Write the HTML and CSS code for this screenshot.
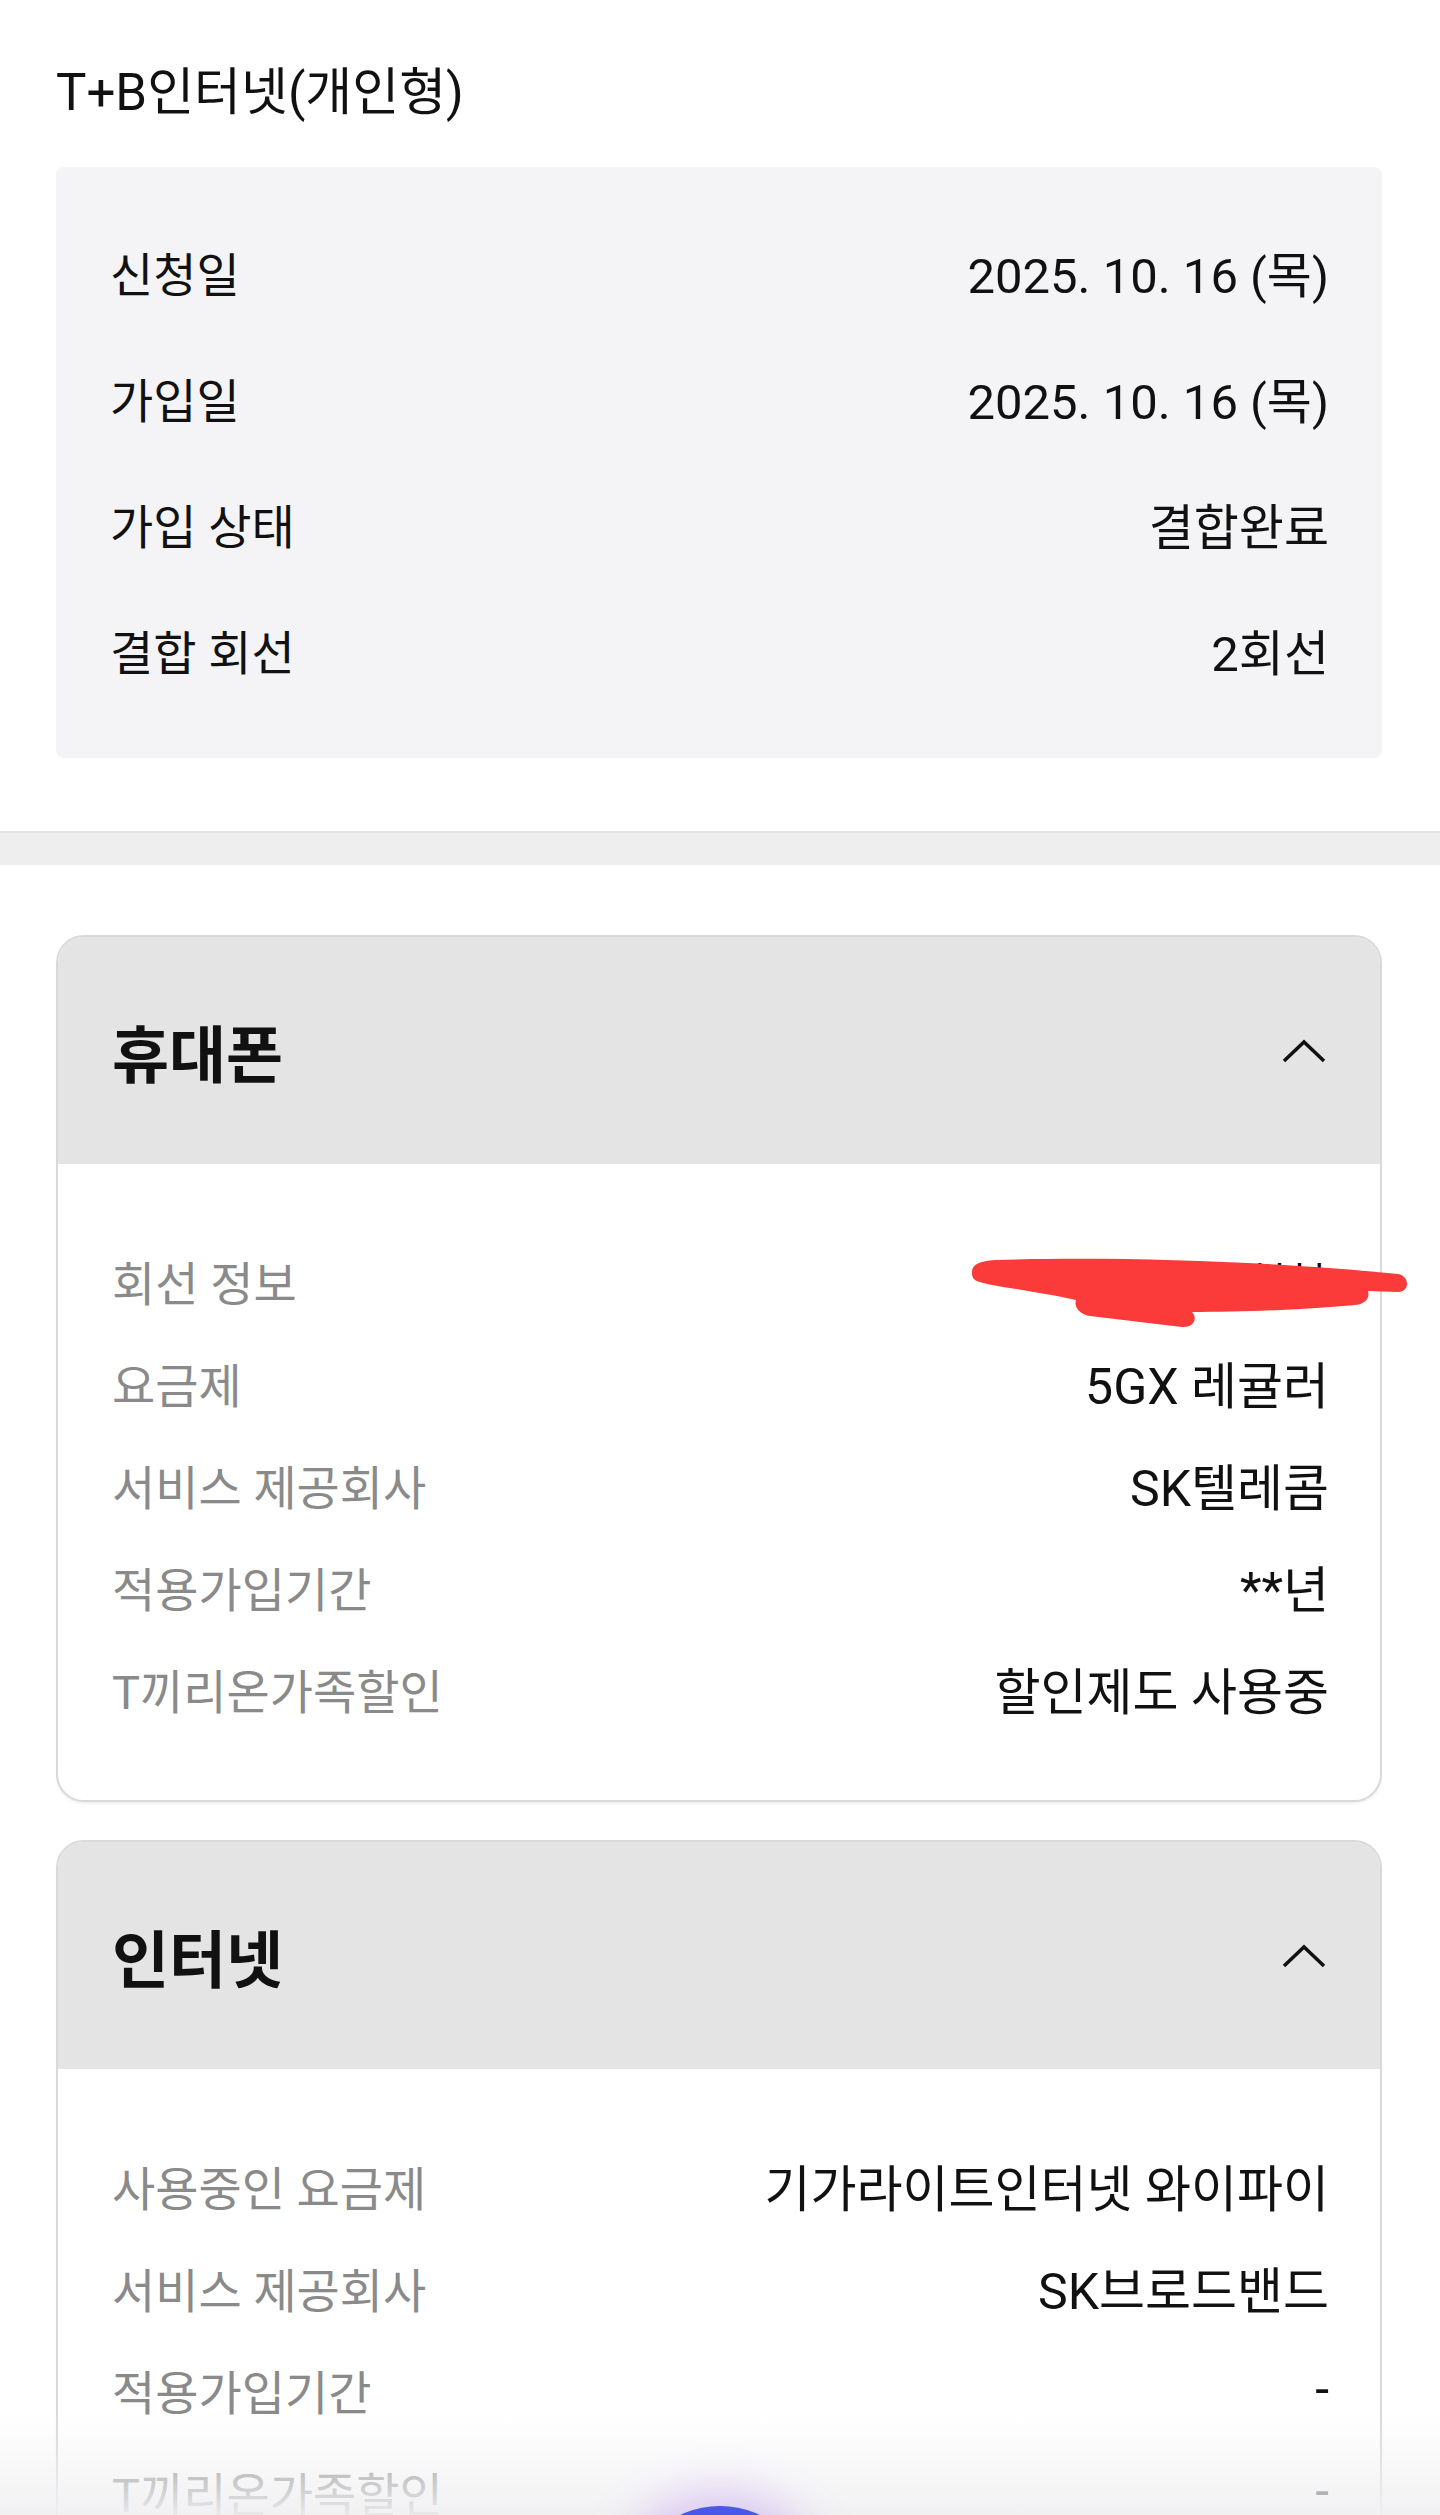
FILE: index.html
```html
<!DOCTYPE html>
<html lang="ko">
<head>
    <meta charset="UTF-8">
    <meta name="viewport" content="width=device-width, initial-scale=1.0">
    <title>결합 상세</title>
    <link rel="stylesheet" href="styles.css">
</head>
<body>
<div class="page">

    <section class="summary">
        <h1 class="plan-title">T+B인터넷(개인형)</h1>
        <dl class="summary-box">
            <div class="summary-row"><dt>신청일</dt><dd>2025. 10. 16 (목)</dd></div>
            <div class="summary-row"><dt>가입일</dt><dd>2025. 10. 16 (목)</dd></div>
            <div class="summary-row"><dt>가입 상태</dt><dd>결합완료</dd></div>
            <div class="summary-row"><dt>결합 회선</dt><dd>2회선</dd></div>
        </dl>
    </section>

    <div class="divider"></div>

    <section class="lines">
        <div class="line-card">
            <div class="line-head">
                <h2>휴대폰</h2>
                <svg class="chevron" viewBox="0 0 44 24" width="44" height="24">
                    <polyline points="2,22 22,3 42,22" fill="none" stroke="#111" stroke-width="3.5"/>
                </svg>
            </div>
            <dl class="line-body">
                <div class="line-row">
                    <dt>회선 정보</dt>
                    <dd class="masked">010-****-****</dd>
                    <!-- 가림 표시 -->
                    <svg class="scribble" viewBox="960 1250 460 90" width="460" height="90">
                        <path fill="#fb3a3a" d="M972 1276 C972 1268 980 1265 995 1264 C1120 1260 1280 1266 1398 1278 C1410 1280 1410 1296 1398 1296 L1368 1295 C1370 1302 1366 1308 1355 1309 C1300 1314 1240 1316 1192 1316 C1198 1322 1194 1332 1182 1331 L1090 1320 C1078 1318 1074 1310 1076 1304 C1030 1294 990 1290 980 1286 C972 1284 972 1280 972 1276 Z"/>
                    </svg>
                </div>
                <div class="line-row"><dt>요금제</dt><dd>5GX 레귤러</dd></div>
                <div class="line-row"><dt>서비스 제공회사</dt><dd>SK텔레콤</dd></div>
                <div class="line-row"><dt>적용가입기간</dt><dd>**년</dd></div>
                <div class="line-row"><dt>T끼리온가족할인</dt><dd>할인제도 사용중</dd></div>
            </dl>
        </div>

        <div class="line-card">
            <div class="line-head">
                <h2>인터넷</h2>
                <svg class="chevron" viewBox="0 0 44 24" width="44" height="24">
                    <polyline points="2,22 22,3 42,22" fill="none" stroke="#111" stroke-width="3.5"/>
                </svg>
            </div>
            <dl class="line-body">
                <div class="line-row"><dt>사용중인 요금제</dt><dd>기가라이트인터넷 와이파이</dd></div>
                <div class="line-row"><dt>서비스 제공회사</dt><dd>SK브로드밴드</dd></div>
                <div class="line-row"><dt>적용가입기간</dt><dd>-</dd></div>
                <div class="line-row"><dt>T끼리온가족할인</dt><dd>-</dd></div>
            </dl>
        </div>
    </section>

    <div class="bottom-fade"></div>
    <div class="fab"></div>
</div>
</body>
</html>
```

FILE: styles.css
```css
html, body {
    margin: 0;
    padding: 0;
}
body {
    font-family: Roboto, "Noto Sans CJK KR", sans-serif;
    color: #111;
    background-color: #fff;
}
.page {
    position: relative;
    height: 2515px;
    overflow: hidden;
}
dl, dt, dd {
    margin: 0;
}

/* 상단 요약 */
.summary {
    padding: 61px 58px 73px 56px;
}
.plan-title {
    margin: 0;
    font-size: 51px;
    font-weight: 400;
    line-height: 64px;
}
.summary-box {
    margin-top: 42px;
    background-color: #f4f4f6;
    border-radius: 8px;
    padding: 41px 53px 46px 54px;
}
.summary-row {
    display: flex;
    justify-content: space-between;
    align-items: center;
    height: 126px;
    font-size: 47px;
}
.summary-row dd {
    font-size: 49px;
}

.divider {
    height: 32px;
    background-color: #eeeeef;
    border-top: 2px solid #e3e3e5;
}

/* 회선 카드 */
.lines {
    display: flex;
    flex-direction: column;
    gap: 38px;
    padding: 70px 58px 0 56px;
}
.line-card {
    border: 2px solid #d9d9d9;
    border-radius: 28px;
    box-shadow: 0 2px 2px rgba(0, 0, 0, 0.06);
    background-color: #fff;
}
.line-head {
    display: flex;
    justify-content: space-between;
    align-items: center;
    height: 227px;
    padding: 0 54px;
    background-color: #e4e4e4;
    border-radius: 26px 26px 0 0;
}
.line-head h2 {
    margin: 0;
    font-size: 62px;
    font-weight: 700;
}
.chevron {
    display: block;
}
.line-body {
    padding: 65px 51px 61px 54px;
}
.line-row {
    position: relative;
    display: flex;
    justify-content: space-between;
    align-items: center;
    height: 102px;
}
.line-row dt {
    color: #8a8a8a;
    font-size: 47px;
}
.line-row dd {
    font-size: 50px;
}
.line-row .masked {
    font-size: 46px;
}
.scribble {
    position: absolute;
    left: 848px;
    top: 17px;
    overflow: visible;
}

/* 하단 떠있는 버튼 */
.bottom-fade {
    position: absolute;
    left: 0;
    right: 0;
    bottom: 0;
    height: 100px;
    background: linear-gradient(rgba(255, 255, 255, 0), rgba(240, 240, 242, 0.92));
}
.fab {
    position: absolute;
    left: 627px;
    top: 2506px;
    width: 186px;
    height: 186px;
    border-radius: 50%;
    background-color: #4a58e8;
    box-shadow: 0 0 40px 16px rgba(175, 130, 240, 0.35);
}
```
